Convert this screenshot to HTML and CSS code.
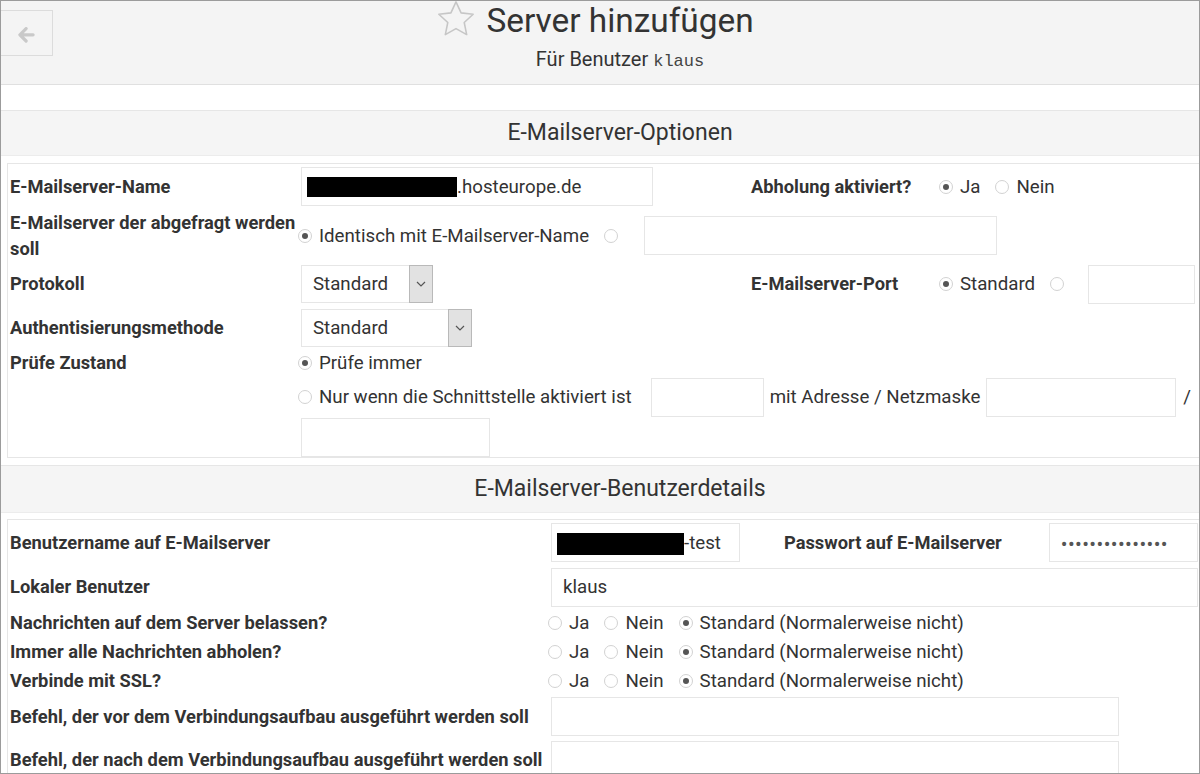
FILE: index.html
```html
<!DOCTYPE html>
<html lang="de">
<head>
<meta charset="utf-8">
<title>Server hinzufügen</title>
<link rel="stylesheet" href="styles.css">
</head>
<body>
<div class="frame">
  <div class="page">
    <header class="top">
      <a class="back" href="#" aria-label="Zurück">
        <svg class="back-icon" viewBox="0 0 16 16" width="17" height="16"><path d="M7.6 1.6 L1.4 7.8 L7.6 14 M1.8 7.8 H14.6" fill="none" stroke="#c9c9c9" stroke-width="3.2" stroke-linecap="round" stroke-linejoin="round"/></svg>
      </a>
      <div class="titles">
        <h1 class="title"><span class="title-text"><svg class="star" viewBox="0 0 24 24" width="42" height="42"><polygon points="12,2.2 14.9,8.5 21.8,9.3 16.7,14 18.1,20.9 12,17.5 5.9,20.9 7.3,14 2.2,9.3 9.1,8.5" fill="none" stroke="#c6c6c6" stroke-width="0.9" stroke-linejoin="round"/></svg>Server hinzufügen</span></h1>
        <div class="subtitle">Für Benutzer <code class="mono">klaus</code></div>
      </div>
      <div></div>
    </header>

    <section class="panel p1">
      <h2 class="panel-head">E-Mailserver-Optionen</h2>
      <div class="box">
        <div class="row h45">
          <div class="lbl">E-Mailserver-Name</div>
          <div class="val"><div class="input w352 pad5"><span class="redact rd1"></span>.hosteurope.de</div></div>
          <div class="lbl">Abholung aktiviert?</div>
          <div class="val"><span class="opt"><i class="radio on"></i>Ja</span><span class="opt"><i class="radio"></i>Nein</span></div>
        </div>
        <div class="row h53">
          <div class="lbl">E-Mailserver der abgefragt werden soll</div>
          <div class="val span">
            <span class="opt"><i class="radio on"></i>Identisch mit E-Mailserver-Name</span><span class="opt"><i class="radio solo"></i></span>
            <div class="input w353 ml-in"></div>
          </div>
        </div>
        <div class="row h44">
          <div class="lbl">Protokoll</div>
          <div class="val"><div class="select w132"><span class="sel-text">Standard</span><span class="sel-btn"><svg viewBox="0 0 10 6" width="10" height="6"><polyline points="1,1 5,5 9,1" fill="none" stroke="#555" stroke-width="1.2"/></svg></span></div></div>
          <div class="lbl">E-Mailserver-Port</div>
          <div class="val"><span class="opt"><i class="radio on"></i>Standard</span><span class="opt"><i class="radio solo"></i></span><div class="input w107 ml-port"></div></div>
        </div>
        <div class="row h43">
          <div class="lbl">Authentisierungsmethode</div>
          <div class="val"><div class="select w171"><span class="sel-text">Standard</span><span class="sel-btn"><svg viewBox="0 0 10 6" width="10" height="6"><polyline points="1,1 5,5 9,1" fill="none" stroke="#555" stroke-width="1.2"/></svg></span></div></div>
        </div>
        <div class="row top-align">
          <div class="lbl line28">Prüfe Zustand</div>
          <div class="val span stack">
            <div class="line h28"><span class="opt"><i class="radio on"></i>Prüfe immer</span></div>
            <div class="line h40">
              <span class="opt"><i class="radio"></i>Nur wenn die Schnittstelle aktiviert ist</span>
              <div class="input w113 ml19"></div>
              <span class="txt ml6">mit Adresse / Netzmaske</span>
              <div class="input w190 ml6"></div>
              <span class="txt ml7">/</span>
            </div>
            <div class="line h40"><div class="input w189"></div></div>
          </div>
        </div>
      </div>
    </section>

    <section class="panel p2">
      <h2 class="panel-head">E-Mailserver-Benutzerdetails</h2>
      <div class="box box2">
        <div class="row2 h45">
          <div class="lbl">Benutzername auf E-Mailserver</div>
          <div class="val"><div class="input w189 pad5"><span class="redact rd2"></span>-test</div><span class="lbl ml44">Passwort auf E-Mailserver</span><div class="input w149 ml47 dots">•••••••••••••••</div></div>
        </div>
        <div class="row2 h44">
          <div class="lbl">Lokaler Benutzer</div>
          <div class="val"><div class="input w647">klaus</div></div>
        </div>
        <div class="row2 h28">
          <div class="lbl">Nachrichten auf dem Server belassen?</div>
          <div class="val"><span class="opt"><i class="radio"></i>Ja</span><span class="opt"><i class="radio"></i>Nein</span><span class="opt"><i class="radio on"></i>Standard (Normalerweise nicht)</span></div>
        </div>
        <div class="row2 h29">
          <div class="lbl">Immer alle Nachrichten abholen?</div>
          <div class="val"><span class="opt"><i class="radio"></i>Ja</span><span class="opt"><i class="radio"></i>Nein</span><span class="opt"><i class="radio on"></i>Standard (Normalerweise nicht)</span></div>
        </div>
        <div class="row2 h29">
          <div class="lbl">Verbinde mit SSL?</div>
          <div class="val"><span class="opt"><i class="radio"></i>Ja</span><span class="opt"><i class="radio"></i>Nein</span><span class="opt"><i class="radio on"></i>Standard (Normalerweise nicht)</span></div>
        </div>
        <div class="row2 h43">
          <div class="lbl">Befehl, der vor dem Verbindungsaufbau ausgeführt werden soll</div>
          <div class="val"><div class="input w568"></div></div>
        </div>
        <div class="row2 h44">
          <div class="lbl">Befehl, der nach dem Verbindungsaufbau ausgeführt werden soll</div>
          <div class="val"><div class="input w568"></div></div>
        </div>
      </div>
    </section>
  </div>
</div>
</body>
</html>
```

FILE: styles.css
```css
* { box-sizing: border-box; }
html, body { margin: 0; padding: 0; background: #fff; }
body {
  font-family: Roboto, "Noto Sans", "Liberation Sans", sans-serif;
  color: #333;
  font-size: 18.7px;
}
.frame {
  width: 1200px;
  height: 774px;
  border: 1px solid #9b9b9b;
  overflow: hidden;
}
.page { width: 1238px; }

/* header */
.top {
  display: grid;
  grid-template-columns: 52px 1fr 52px;
  height: 84px;
  background: #f4f4f4;
  border-bottom: 1px solid #e0e0e0;
}
.back {
  display: flex;
  align-items: center;
  justify-content: center;
  margin: 9px 0 0 -1px;
  width: 53px;
  height: 46px;
  border: 1px solid #dcdcdc;
  padding-top: 3px;
}
.titles { text-align: center; }
.title {
  margin: 0;
  font-size: 33.4px;
  line-height: 40px;
  font-weight: 400;
  color: #333;
}
.title-text { position: relative; }
.star {
  position: absolute;
  right: calc(100% + 9px);
  top: -3px;
}
.subtitle {
  margin-top: 6px;
  font-size: 20px;
  line-height: 24px;
}
.mono {
  font-family: "Liberation Mono", "DejaVu Sans Mono", monospace;
  font-size: 17px;
  color: #444;
}

/* panels */
.panel.p1 { margin-top: 25px; }
.panel.p2 { margin-top: 7px; }
.panel-head {
  margin: 0;
  height: 46px;
  line-height: 44px;
  background: #f5f5f5;
  border-top: 1px solid #e6e6e6;
  border-bottom: 1px solid #ececec;
  text-align: center;
  font-size: 23px;
  font-weight: 400;
  color: #333;
}
.p2 .panel-head { height: 48px; line-height: 46px; }
.box {
  margin: 7px 0 0 6px;
  border: 1px solid #e6e6e6;
}
.box2 { margin-top: 6px; }

.row {
  display: grid;
  grid-template-columns: 293px 448px 193px 1fr;
  align-items: center;
}
.row2 {
  display: grid;
  grid-template-columns: 543px 1fr;
  align-items: center;
}
.row.top-align { align-items: start; }
.h45 { height: 45px; }
.h53 { height: 53px; }
.h44 { height: 44px; }
.h43 { height: 43px; }
.h40 { height: 40px; }
.h29 { height: 29px; }
.h28 { height: 28px; }

.lbl {
  padding-left: 2px;
  font-weight: 700;
  font-size: 18.3px;
  line-height: 26px;
}
.val .lbl { padding-left: 0; }
.line28 { line-height: 28px; }
.val {
  display: flex;
  align-items: center;
  white-space: nowrap;
}
.val.span { grid-column: 2 / -1; }
.val.stack { flex-direction: column; align-items: stretch; }
.line { display: flex; align-items: center; }

/* inputs */
.input {
  flex: none;
  display: flex;
  align-items: center;
  height: 39px;
  border: 1px solid #e6e6e6;
  background: #fff;
  padding: 0 11px;
}
.pad5 { padding-left: 5px; }
.w352 { width: 352px; }
.w353 { width: 353px; }
.w107 { width: 107px; }
.w149 { width: 149px; }
.w113 { width: 113px; }
.w190 { width: 190px; }
.w189 { width: 189px; }
.w568 { width: 568px; }
.w647 { width: 647px; }
.redact { display: inline-block; background: #000; flex: none; }
.rd1 { width: 150px; height: 20px; }
.rd2 { width: 127px; height: 22px; margin-top: 3px; }
.dots {
  font-size: 20px;
  letter-spacing: 0.4px;
  color: #555;
  padding-top: 2px;
}

.ml-in { margin-left: 26px; }
.ml-port { margin-left: 24px; }
.ml19 { margin-left: 19px; }
.ml6 { margin-left: 6px; }
.ml7 { margin-left: 7px; }
.ml44 { margin-left: 44px; }
.ml47 { margin-left: 47px; }

/* selects */
.select {
  display: flex;
  height: 38px;
  border: 1px solid #e6e6e6;
  background: #fff;
}
.w132 { width: 132px; }
.w171 { width: 171px; }
.sel-text { flex: 1; display: flex; align-items: center; padding-left: 11px; }
.sel-btn {
  width: 24px;
  display: flex;
  align-items: center;
  justify-content: center;
  background: #e2e2e2;
  border: 1px solid #b9b9b9;
  margin: -1px -1px -1px 0;
}

/* radios */
.opt { display: inline-flex; align-items: center; flex: none; }
.opt + .opt { margin-left: 15px; }
.val > .opt:first-child, .line > .opt:first-child { margin-left: -3px; }
.radio {
  display: inline-block;
  width: 14px;
  height: 14px;
  border: 1px solid #d2d2d2;
  border-radius: 50%;
  background: #fff;
  margin-right: 7px;
  position: relative;
  flex: none;
}
.radio.solo { margin-right: 0; }
.radio.on::after {
  content: "";
  position: absolute;
  left: 3px;
  top: 3px;
  width: 6px;
  height: 6px;
  border-radius: 50%;
  background: #555;
}
```
